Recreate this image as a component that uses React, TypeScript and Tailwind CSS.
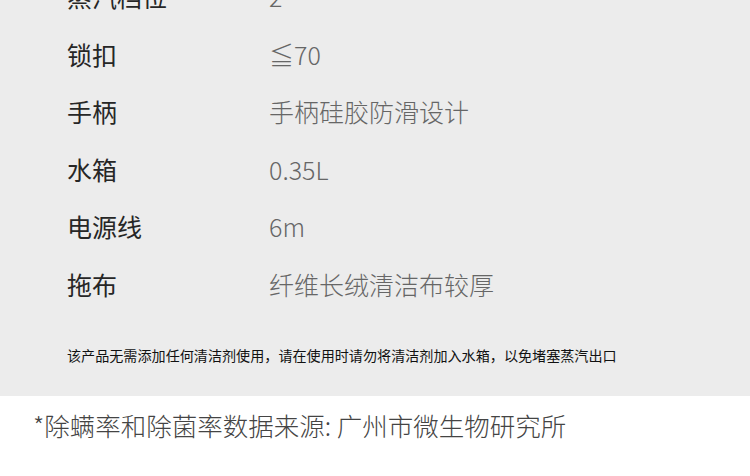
import React from 'react';

const SPECS: { label: string; value: string }[] = [
  { label: '蒸汽档位', value: '2' },
  { label: '锁扣', value: '≦70' },
  { label: '手柄', value: '手柄硅胶防滑设计' },
  { label: '水箱', value: '0.35L' },
  { label: '电源线', value: '6m' },
  { label: '拖布', value: '纤维长绒清洁布较厚' },
];

const font = { fontFamily: '"Noto Sans CJK SC", "Noto Sans", sans-serif' };

export default function App() {
  return (
    <div className="w-[750px] h-[476px] overflow-hidden bg-white" style={font}>
      {/* spec table, scrolled so the first row is cut at the top */}
      <div className="bg-[#ececec] pb-[31px]">
        <div className="-mt-[32px] flex flex-col">
          {SPECS.map(s => (
            <div key={s.label} className="flex items-center h-[57.5px] pl-[67px] text-[25px] leading-none">
              <span className="w-[202px] text-[#262626]">{s.label}</span>
              <span className="text-[#666] font-light">{s.value}</span>
            </div>
          ))}
        </div>
        <p className="mt-[32px] pl-[67px] text-[14.1px] leading-[20px] text-[#111]">
          该产品无需添加任何清洁剂使用，请在使用时请勿将清洁剂加入水箱，以免堵塞蒸汽出口
        </p>
      </div>

      {/* source note */}
      <p className="pt-[11px] pl-[33px] text-[25.5px] leading-[36px] text-[#444] font-light">
        *除螨率和除菌率数据来源: 广州市微生物研究所
      </p>
    </div>
  );
}
